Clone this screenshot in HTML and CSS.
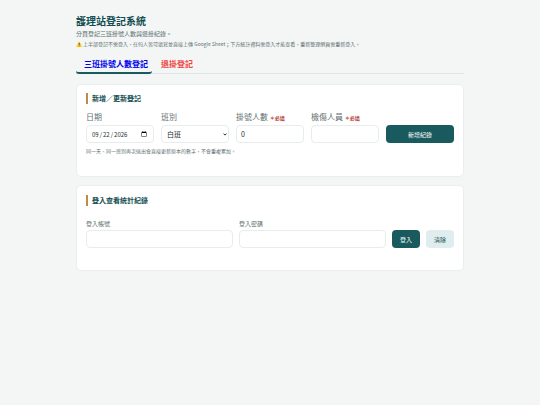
FILE: index.html
```
<!DOCTYPE html>
<html lang="zh-Hant">
<head>
  <meta charset="UTF-8">
  <meta name="viewport" content="width=device-width, initial-scale=1.0">
  <title>護理站登記系統</title>
  <link rel="stylesheet" href="styles.css">
</head>
<body>
  <div class="container">
    <header>
      <h1>護理站登記系統</h1>
      <p class="subtitle">分頁登記三班掛號人數與退掛紀錄。</p>
      <p class="notice">⚠️ 上半部登記不需登入，任何人皆可填寫並直接上傳 Google Sheet；下方統計資料需登入才能查看，重新整理網頁需重新登入。</p>
    </header>

    <nav class="tabs">
      <a class="tab active" href="#shift">三班掛號人數登記</a>
      <a class="tab refund" href="#refund">退掛登記</a>
    </nav>

    <section class="card entry-card" id="shift">
      <h2>新增／更新登記</h2>
      <form class="entry-form">
        <div class="field">
          <label for="date">日期</label>
          <input type="date" id="date" value="2026-09-22">
        </div>
        <div class="field">
          <label for="shiftType">班別</label>
          <select id="shiftType">
            <option>白班</option>
            <option>小夜</option>
            <option>大夜</option>
          </select>
        </div>
        <div class="field">
          <label for="count">掛號人數 <span class="required">＊必填</span></label>
          <input type="number" id="count" value="0" min="0">
        </div>
        <div class="field">
          <label for="staff">檢傷人員 <span class="required">＊必填</span></label>
          <input type="text" id="staff">
        </div>
        <button type="button" class="btn">新增紀錄</button>
      </form>
      <p class="hint">同一天、同一班別再次送出會直接更新原本的數字，不會重複累加。</p>
    </section>

    <section class="card login-card">
      <h2>登入查看統計紀錄</h2>
      <form class="login-form">
        <div class="field">
          <label for="account">登入帳號</label>
          <input type="text" id="account">
        </div>
        <div class="field">
          <label for="password">登入密碼</label>
          <input type="password" id="password">
        </div>
        <button type="button" class="btn">登入</button>
        <button type="button" class="btn btn-light">清除</button>
      </form>
    </section>
  </div>
</body>
</html>
```

FILE: styles.css
```
* {
  box-sizing: border-box;
}
body {
  margin: 0;
  padding: 13px;
  background: #f3f6f5;
  color: #1f2d2d;
  font-family: "Noto Sans CJK TC", sans-serif;
  font-size: 6px;
}
.container {
  max-width: 388px;
  margin: 0 auto;
}
h1, h2, p {
  margin: 0;
}
h1 {
  color: #134e52;
  font-size: 10px;
  line-height: 15px;
}
.subtitle {
  color: #5f7172;
  font-size: 6px;
  line-height: 11px;
}
.notice {
  color: #5f7172;
  font-size: 5px;
  line-height: 9px;
}

/* tabs */
.tabs {
  display: flex;
  gap: 1px;
  margin: 6px 0 10px;
  border-bottom: 1px solid #dde6e6;
}
.tab {
  padding: 4px 4px 2px 8px;
  margin-bottom: -1px;
  border-bottom: 2px solid transparent;
  border-radius: 3px;
  font-size: 8px;
  line-height: 12px;
  font-weight: bold;
  text-decoration: none;
}
.tab.active {
  color: #0000ee;
  border-bottom-color: #185a5e;
}
.tab.refund {
  color: #f04444;
}

/* cards */
.card {
  margin-bottom: 8px;
  padding: 8px 9px;
  background: #fff;
  border: 1px solid #e9efef;
  border-radius: 5px;
}
.entry-card {
  padding-bottom: 21px;
}
.login-card {
  padding-top: 9px;
  padding-bottom: 22px;
}
h2 {
  padding-left: 4px;
  border-left: 2px solid #c08a4a;
  color: #134e52;
  font-size: 7px;
  line-height: 11px;
}
.entry-form {
  display: grid;
  grid-template-columns: repeat(5, 1fr);
  gap: 7px;
  align-items: end;
  margin-top: 5px;
}
.field {
  min-width: 0;
}
.field label {
  display: block;
  color: #5f7172;
  font-size: 8px;
  line-height: 16px;
}
.required {
  color: #b3362b;
  font-size: 5px;
  line-height: 1;
  font-weight: bold;
}
input, select {
  display: block;
  width: 100%;
  height: 18px;
  padding: 0 4px;
  background: #fff;
  border: 1px solid #e6eded;
  border-radius: 4px;
  color: #1f2d2d;
  font-family: inherit;
  font-size: 7px;
}
input[type="date"] {
  font-size: 6px;
}
select {
  appearance: none;
  padding: 0 5px;
  background: #fff url("data:image/svg+xml,%3Csvg xmlns='http://www.w3.org/2000/svg' viewBox='0 0 4 3'%3E%3Cpath d='M.5.6 2 2.1 3.5.6' fill='none' stroke='%23111' stroke-width='.9'/%3E%3C/svg%3E") no-repeat right 1px center / 4px 3px;
}
.btn {
  height: 18px;
  padding: 0 8px;
  background: #185a5e;
  border: none;
  border-radius: 4px;
  color: #fff;
  font-family: inherit;
  font-size: 6px;
  cursor: pointer;
}
.btn-light {
  background: #e0edee;
  color: #134e52;
}
.hint {
  margin-top: 3px;
  color: #5f7172;
  font-size: 5px;
  line-height: 9px;
}
.login-form {
  display: flex;
  align-items: flex-end;
  gap: 6px;
  margin-top: 11px;
}
.login-form .field {
  flex: 1;
}
.login-form label {
  font-size: 6px;
  line-height: 13px;
}
```
